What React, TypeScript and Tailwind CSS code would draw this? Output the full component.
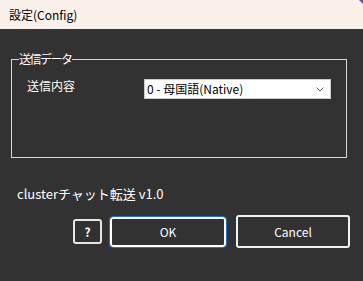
import React from "react";

const FONT = { fontFamily: '"Noto Sans CJK JP", "Noto Sans", sans-serif' };

export default function App() {
  return (
    <div
      className="w-[363px] h-[281px] bg-[#323232] flex flex-col overflow-hidden relative"
      style={FONT}
    >
      <div className="h-[29px] bg-[#f9f0ea] flex items-center pl-[9px] text-[12px] text-black shrink-0">
        設定(Config)
      </div>
      <div className="absolute top-0 right-0 w-0 h-0 border-t-[4px] border-l-[4px] border-t-[#6b4bb0] border-l-transparent" />

      <div className="relative mt-[30px] ml-[11px] w-[336px] h-[99px] border border-[#d8d8d8]">
        <div className="absolute -top-[9px] left-[7px] px-0 bg-[#323232] text-white text-[12px] leading-[16px] tracking-[-1.5px]">
          送信データ
        </div>
        <div className="flex items-start pt-[16px] pl-[15px]">
          <div className="w-[117px] text-white text-[12px] leading-[20px]">送信内容</div>
          <div className="mt-[3px] w-[187px] h-[20px] bg-white border border-[#c9c9c9] flex items-center pl-[2px] pr-[5px]">
            <span className="text-[12px] text-black leading-[18px] flex-1">0 - 母国語(Native)</span>
            <svg width="8" height="5" viewBox="0 0 8 5" className="mr-[1px]">
              <path d="M0.5 0.5 L4 4 L7.5 0.5" fill="none" stroke="#606060" strokeWidth="1" />
            </svg>
          </div>
        </div>
      </div>

      <div className="mt-[27px] ml-[17px] text-white text-[13px] leading-[18px]">
        clusterチャット転送 v1.0
      </div>

      <div className="mt-[12px] flex items-center justify-end pr-[13px] gap-[7px]">
        <button className="w-[29px] h-[25px] border-2 border-[#e6e6e6] rounded-[3px] bg-[#323232] text-white text-[12px] font-bold flex items-center justify-center mr-[1px]">
          ?
        </button>
        <button className="w-[116px] h-[30px] border-2 border-white rounded-[3px] outline outline-1 outline-[#1a73d0] bg-[#323232] text-white text-[12px] flex items-center justify-center">
          OK
        </button>
        <button className="ml-[3px] w-[114px] h-[33px] border-2 border-[#f0f0f0] rounded-[3px] bg-[#323232] text-white text-[12px] flex items-center justify-center">
          Cancel
        </button>
      </div>
    </div>
  );
}
